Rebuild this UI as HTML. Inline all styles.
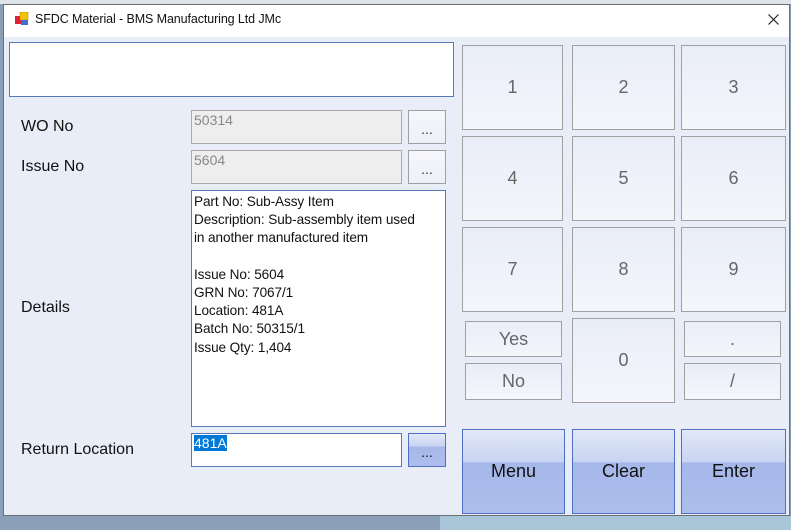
<!DOCTYPE html>
<html><head><style>
body{margin:0;width:791px;height:530px;overflow:hidden;background:#8aa0b8;font-family:"Liberation Sans",Arial,sans-serif;position:relative}
.a{position:absolute;box-sizing:border-box}
.win{left:3px;top:4px;width:787px;height:512px;background:#e8edf8;border:1px solid #6f6f6f}
.title{left:4px;top:5px;width:785px;height:32px;background:#fff}
.lbl{font-size:16px;color:#111}
.k{background:linear-gradient(#e9edf8,#f4f6fb);border:1px solid #a0a0a0;color:#666;font-size:18px;display:flex;align-items:center;justify-content:center}
.b{background:linear-gradient(#e2e8f8 0%,#c8d4f2 38%,#a6b7ea 40%,#adbdec 100%);border:1px solid #4e6fc3;color:#111;font-size:18px;display:flex;align-items:center;justify-content:center}
.dot{background:linear-gradient(#f6f7fb,#eef0f6);border:1px solid #a0a0a0;font-size:14px;display:flex;align-items:flex-end;justify-content:center;padding-bottom:6px;color:#333}
</style></head><body>
<div class="a" style="left:0;top:0;width:791px;height:4px;background:#dfe4ea"></div>
<div class="a" style="left:440px;top:516px;width:351px;height:14px;background:#a8c6d8"></div>
<div class="a win"></div>
<div class="a title"></div>
<svg class="a" style="left:15px;top:12px" width="14" height="14"><rect x="0" y="4" width="7" height="8" fill="#d23" /><rect x="5" y="0" width="8" height="8" fill="#f5c400" stroke="#a08000" stroke-width="0.5"/><rect x="6" y="8" width="7" height="5" fill="#3c6fd0"/></svg>
<div class="a" style="left:35px;top:12px;font-size:12.5px;color:#111;letter-spacing:-0.1px">SFDC Material - BMS Manufacturing Ltd JMc</div>
<svg class="a" style="left:768px;top:14px" width="11" height="11"><path d="M0.5 0.5L10.5 10.5M10.5 0.5L0.5 10.5" stroke="#222" stroke-width="1.2"/></svg>
<div class="a" style="left:9px;top:42px;width:445px;height:55px;background:#fff;border:1px solid #5a78b8"></div>
<div class="a lbl" style="left:21px;top:118px">WO No</div>
<div class="a lbl" style="left:21px;top:158px">Issue No</div>
<div class="a lbl" style="left:21px;top:299px">Details</div>
<div class="a lbl" style="left:21px;top:441px">Return Location</div>
<div class="a" style="left:191px;top:110px;width:211px;height:34px;background:#eee;border:1px solid #aaa;color:#888;font-size:14px;padding:1px 2px">50314</div>
<div class="a" style="left:191px;top:150px;width:211px;height:34px;background:#eee;border:1px solid #aaa;color:#888;font-size:14px;padding:1px 2px">5604</div>
<div class="a dot" style="left:408px;top:110px;width:38px;height:34px">...</div>
<div class="a dot" style="left:408px;top:150px;width:38px;height:34px">...</div>
<div class="a" style="left:191px;top:190px;width:255px;height:237px;background:#fff;border:1px solid #5a78b8;font-size:13.6px;line-height:18.2px;padding:2px 2px;color:#111;letter-spacing:-0.1px">Part No: Sub-Assy Item<br>Description: Sub-assembly item used<br>in another manufactured item<br><br>Issue No: 5604<br>GRN No: 7067/1<br>Location: 481A<br>Batch No: 50315/1<br>Issue Qty: 1,404</div>
<div class="a" style="left:191px;top:433px;width:211px;height:34px;background:#fff;border:1px solid #5a78b8;font-size:14px;padding:1px 2px"><span style="background:#0078d7;color:#fff">481A</span></div>
<div class="a b" style="left:408px;top:433px;width:38px;height:34px;font-size:14px;align-items:flex-end;padding-bottom:6px">...</div>
<div class="a k" style="left:462px;top:45px;width:101px;height:85px">1</div>
<div class="a k" style="left:572px;top:45px;width:103px;height:85px">2</div>
<div class="a k" style="left:681px;top:45px;width:105px;height:85px">3</div>
<div class="a k" style="left:462px;top:136px;width:101px;height:85px">4</div>
<div class="a k" style="left:572px;top:136px;width:103px;height:85px">5</div>
<div class="a k" style="left:681px;top:136px;width:105px;height:85px">6</div>
<div class="a k" style="left:462px;top:227px;width:101px;height:85px">7</div>
<div class="a k" style="left:572px;top:227px;width:103px;height:85px">8</div>
<div class="a k" style="left:681px;top:227px;width:105px;height:85px">9</div>
<div class="a k" style="left:465px;top:321px;width:97px;height:36px">Yes</div>
<div class="a k" style="left:465px;top:363px;width:97px;height:37px">No</div>
<div class="a k" style="left:572px;top:318px;width:103px;height:85px">0</div>
<div class="a k" style="left:684px;top:321px;width:97px;height:36px">.</div>
<div class="a k" style="left:684px;top:363px;width:97px;height:37px">/</div>
<div class="a b" style="left:462px;top:429px;width:103px;height:85px">Menu</div>
<div class="a b" style="left:572px;top:429px;width:103px;height:85px">Clear</div>
<div class="a b" style="left:681px;top:429px;width:105px;height:85px">Enter</div>
</body></html>
